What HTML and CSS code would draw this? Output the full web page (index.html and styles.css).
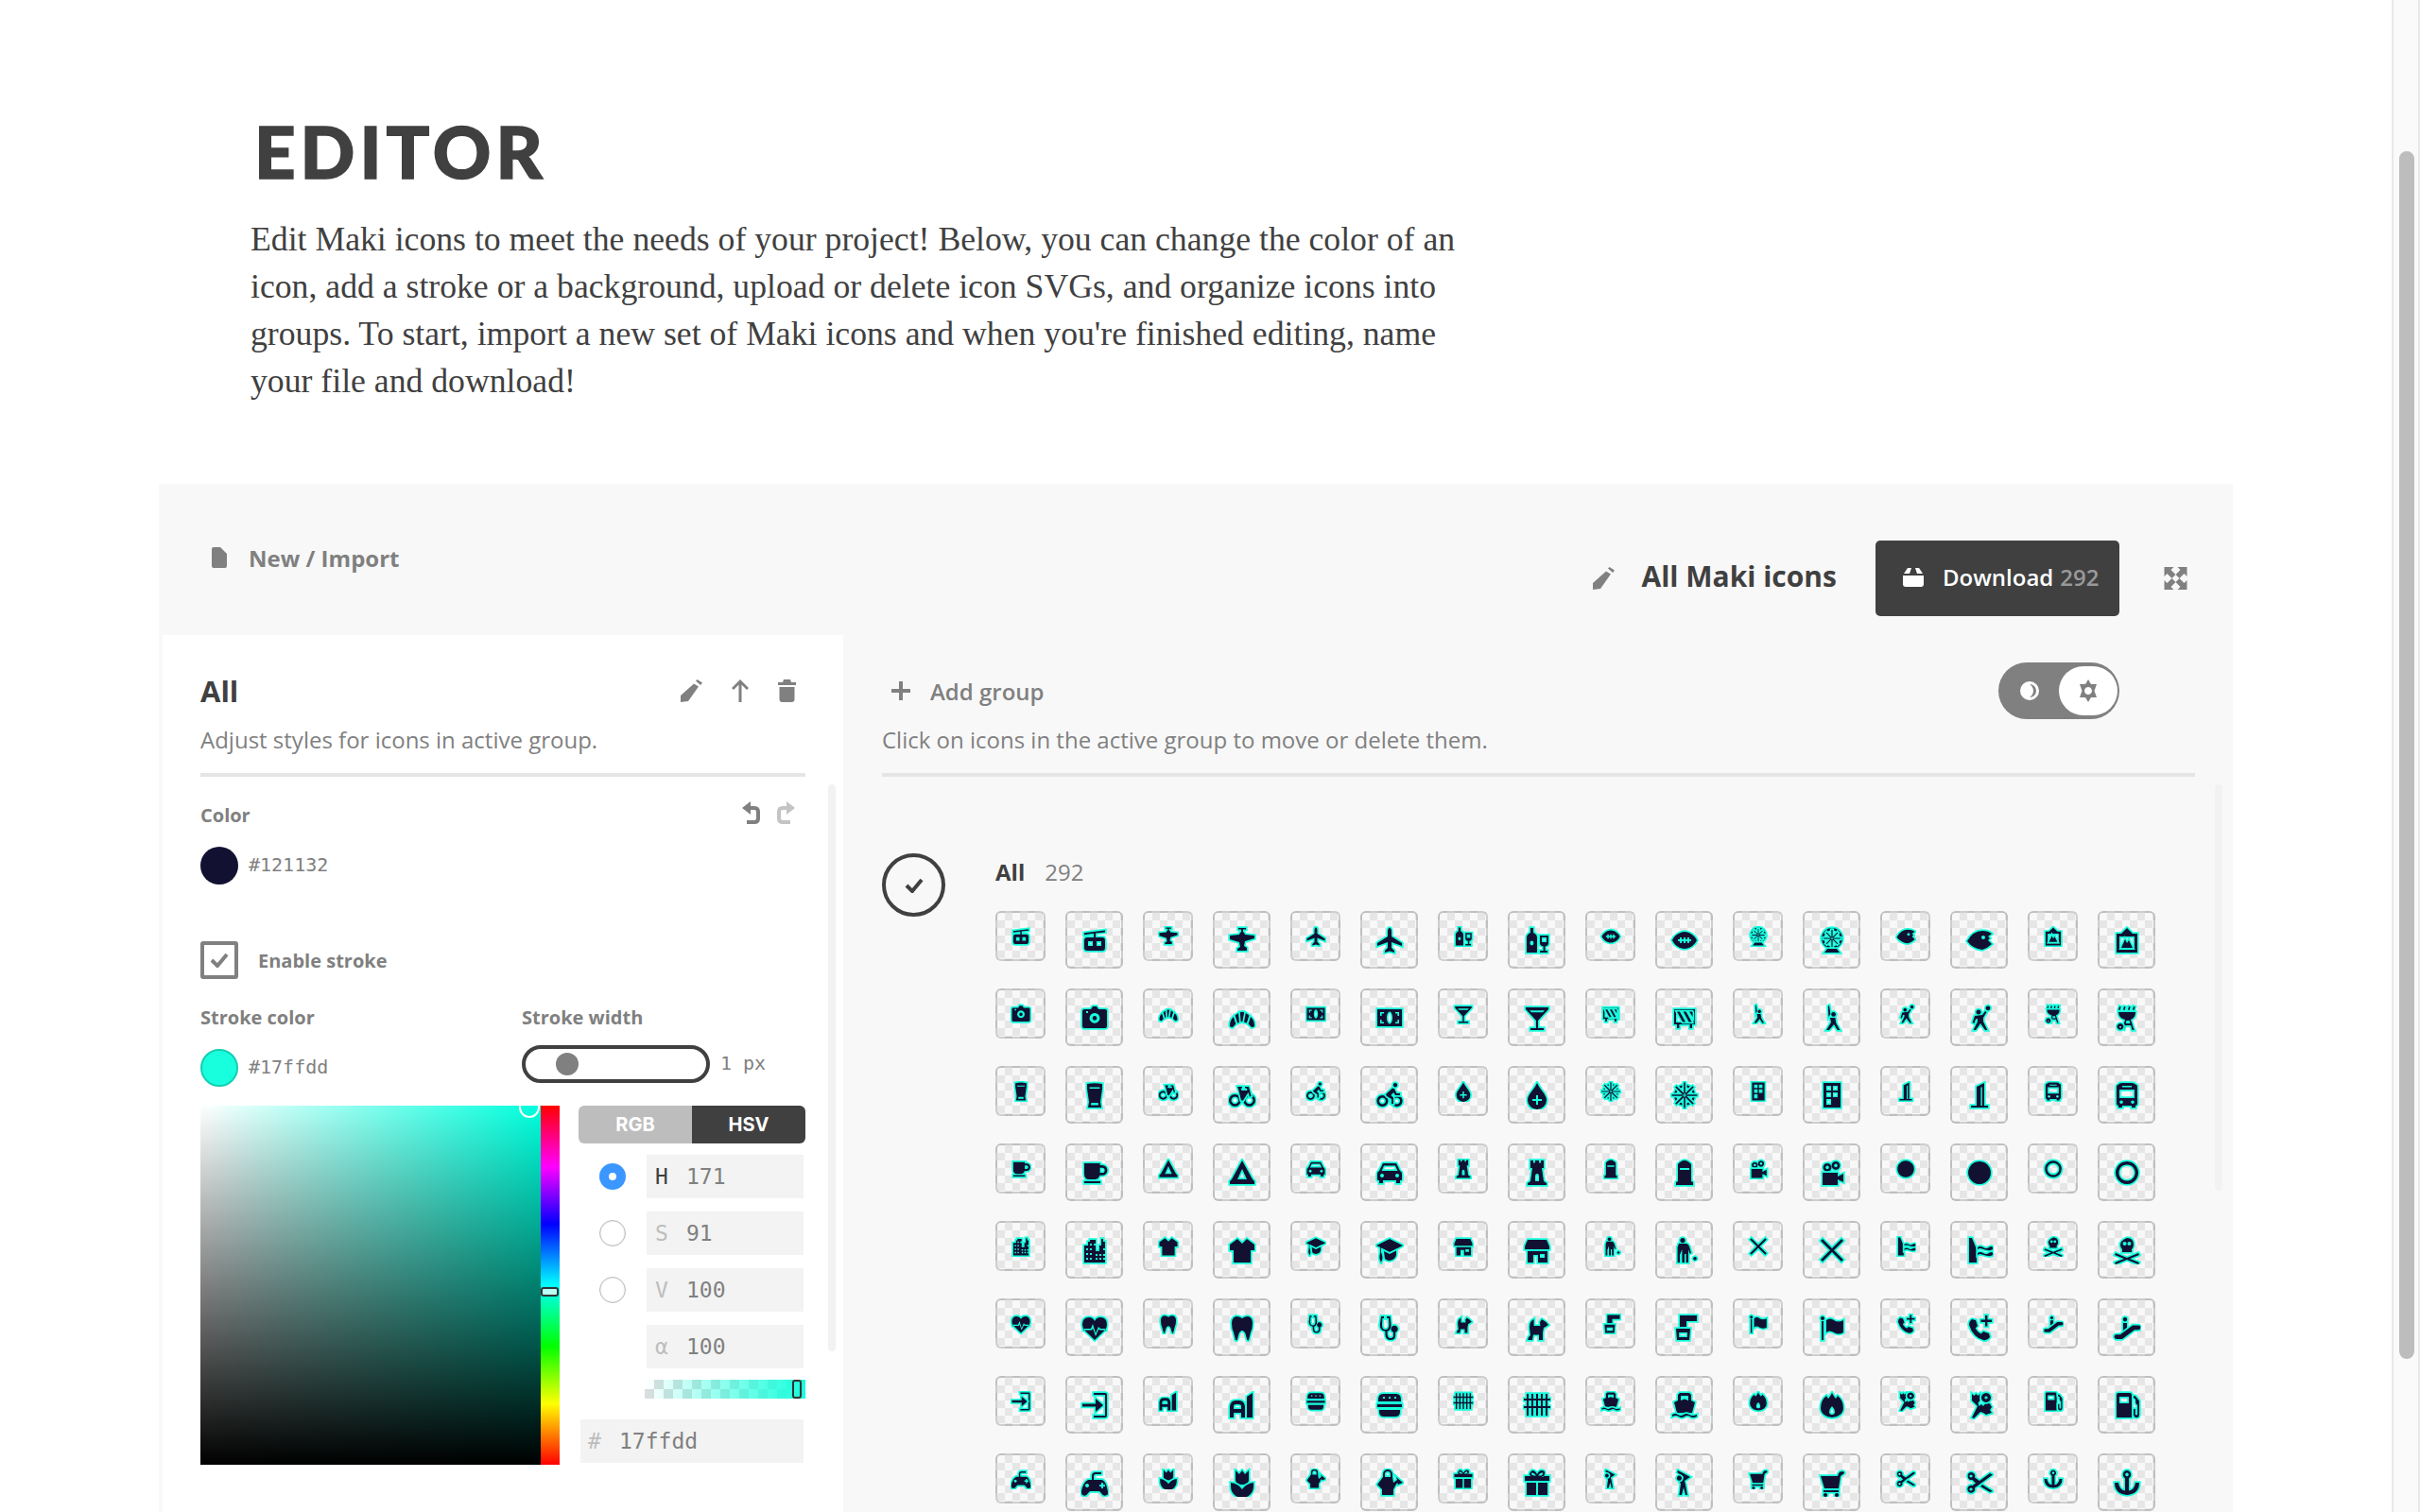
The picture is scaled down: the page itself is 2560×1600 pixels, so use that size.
FILE: index.html
```html
<!DOCTYPE html>
<html lang="en">
<head>
  <meta charset="UTF-8" />
  <title>Maki Editor</title>
  <link rel="stylesheet" href="styles.css">
</head>
<body>
  <!-- Maki icons, reused for both tile sizes -->
  <svg class="sprite" xmlns="http://www.w3.org/2000/svg">
    <symbol id="aerialway" viewBox="0 0 15 15"><path d="M2 3.600 13 2.200v1L8 3.800V6h3.500Q13 6 13 7.500v4q0 1.500-1.500 1.500h-8Q2 13 2 11.500v-4Q2 6 3.500 6H7V3.900L2 4.600zM4 8v2.500h2.500V8zM8.500 8v2.500H11V8z"/></symbol>
    <symbol id="airfield" viewBox="0 0 15 15"><path d="M5.500 1h4v.8H8V3q.7.4 1 1.500l5 .5v1.500l-5 1.500-.5 2.500 1.500 1v1.500H5V12l1.500-1L6 8.500 1 7V5l5-.5q.3-1.100 1-1.500V1.800H5.500z"/></symbol>
    <symbol id="airport" viewBox="0 0 15 15"><path d="M7.500 1Q8.500 1 8.500 3v2.500L14 9v1.500L8.500 8.500v3L10 13v1l-2.500-.7L5 14v-1l1.500-1.500v-3L1 10.500V9l5.500-3.500V3Q6.500 1 7.500 1z"/></symbol>
    <symbol id="alcohol" viewBox="0 0 15 15"><path d="M4 1h1.500v2.500Q7.500 4.500 7.500 6v8H2V6q0-1.500 2-2.500zM3.700 9a1 1.200 0 1 0 2 0 1 1.200 0 1 0-2 0z"/><path d="M9 5h4.500v4q0 1.500-1.700 1.700V13H13v1H9v-1h1.800v-2.300Q9 10.500 9 9zM10 6v2.500h2.500V6z"/></symbol>
    <symbol id="football" viewBox="0 0 15 15"><path d="M7.500 3C10 3 13 5 14 7.500 13 10 10 12 7.500 12S2 10 1 7.500C2 5 5 3 7.500 3zM4 7h1V6h1v1h1V6h1v1h1V6h1v1h1v1h-1v1H9V8H8v1H7V8H6v1H5V8H4z"/></symbol>
    <symbol id="wheel-park" viewBox="0 0 15 15"><path d="M7.500 1a5.500 5.500 0 1 1-.01 0zM7.500 2.200a4.300 4.300 0 1 0 .01 0z"/><path d="M7.200 2h.6v9h-.6zM3 6.200h9v.6H3zM4.300 3.600l.4-.4 6 6-.4.4zM10.300 3.200l.4.4-6 6-.4-.4z"/><path d="M5 12h5l1.500 2h-8z"/></symbol>
    <symbol id="fish" viewBox="0 0 15 15"><path d="M1 8Q4 2.500 9 2.500q3 0 5 1.500l-2 1.500 1 1-1 1 2 2q-2 2-5 3-5-.5-8-4.500zM9.500 5a1 1 0 1 0 .01 0z"/></symbol>
    <symbol id="gallery" viewBox="0 0 15 15"><path d="M7.500 1l3 3H13v10H2V4h2.500zM3.500 5.500v7h8v-7z"/><path d="M4.500 11.500 6.500 7l1 2 1-1.500 2 4z"/></symbol>

    <symbol id="camera" viewBox="0 0 15 15"><path d="M5.500 3 6.500 1.500h2L9.500 3H13q1 0 1 1v8q0 1-1 1H2q-1 0-1-1V4q0-1 1-1zM7.500 5a2.700 2.700 0 1 0 .01 0zM7.500 6.500a1.200 1.200 0 1 1-.01 0zM3 4v1h1V4z"/></symbol>
    <symbol id="croissant" viewBox="0 0 15 15"><path d="M1 11.500C1 9.500 1.800 8 3 7l1.200 3.800-1.700 1.700Q1 12.500 1 11.500z"/><path d="M3.800 6.300 5.600 5l.9 4.800-1.500.5z"/><path d="M6.400 4.600q1.100-.4 2.200 0L8.200 9.500H6.800z"/><path d="M11.200 6.300 9.400 5l-.9 4.800 1.500.5z"/><path d="M14 11.500C14 9.500 13.200 8 12 7l-1.200 3.800 1.700 1.700q1.500 0 1.500-1z"/></symbol>
    <symbol id="money" viewBox="0 0 15 15"><path d="M1 3h13v9H1zM7.500 4.300a1.500 3.200 0 1 0 .01 0zM2.500 4.500v2h.8V5.300h1.200v-.8zM12.500 4.500h-2v.8h1.200v1.200h.8zM2.500 10.500h2v-.8H3.300V8.500h-.8zM12.500 10.500v-2h-.8v1.200h-1.200v.8z"/></symbol>
    <symbol id="martini" viewBox="0 0 15 15"><path d="M1.500 2h12v1L8 9v4h3v1H4v-1h3V9L1.500 3zM3.500 3.600l1 1h6l1-1z"/></symbol>
    <symbol id="barrier" viewBox="0 0 15 15"><path d="M2 3h11v8h-1.500v2h-1.200v-2H4.700v2H3.500v-2H2zM3 4v6h9V4z"/><path d="M3.500 4.200H5l3 5.600H6.500zM6.800 4.200h1.500l3 5.600H9.800zM10 4.200h1.500l.3.600v2.200z"/></symbol>
    <symbol id="baseball" viewBox="0 0 15 15"><path d="M5.400 1.500 6 1l.7 4.500-1 1.500zM8.300 4.500a1.200 1.200 0 1 1-.01 0zM6.500 7.500h2.700l.5 3 2 3.500h-1.300L8.500 11 6 14H4.500L7 10z"/></symbol>
    <symbol id="basketball" viewBox="0 0 15 15"><path d="M12 1.200a1.200 1.200 0 1 1-.01 0zM7 3.200a1.300 1.300 0 1 1-.01 0zM5 6.500 9 6l1.500-2 .8.5L9.500 7.500v2l2.200 4.500h-1.200L8 10.500 5.500 14H4.300l2.200-4.500V8l-1 .2L4.700 10.500 3.800 10z"/></symbol>
    <symbol id="bbq" viewBox="0 0 15 15"><path d="M3.500 1.500l.8.300-.5 1.700-.8-.3zM6 1.500l.8.300-.5 1.700-.8-.3zM8.500 1.500l.8.300-.5 1.700-.8-.3zM11 1.500l.8.300-.5 1.700-.8-.3z"/><path d="M3 4.500h9q0 3-2.500 4l1.800 5.500h-1L9.500 11.500H6.700L6 13.500 5.300 13l1.200-4.500Q3 7.500 3 4.500zM7.200 9l-.3 1.500h2.300L8.800 9z"/><path d="M4 10.500a1.700 1.700 0 1 1-.01 0zM4 12a.4.4 0 1 0 .01 0z"/></symbol>

    <symbol id="beer" viewBox="0 0 15 15"><path d="M3.500 1.500q4-.8 8 0V4l-1 7 .5 3H4l.5-3-1-7zM4.800 3.200v.8h5.400v-.8zM5.700 11.500l-.2 1.300h4l-.2-1.300z"/></symbol>
    <symbol id="bicycle" viewBox="0 0 15 15"><path d="M3.700 7a3.200 3.200 0 1 1-.01 0zM3.700 8.300a1.900 1.900 0 1 0 .01 0zM11.300 7a3.200 3.200 0 1 1-.01 0zM11.300 8.300a1.900 1.900 0 1 0 .01 0z"/><path d="M5 3h2.500v.8h-.7l.4 1.200h3l-.3-1.300H9V3h2l1.300 5-.8.300L10.700 6l-2.700 4.300H7L5.700 5z"/></symbol>
    <symbol id="bicycle-share" viewBox="0 0 15 15"><path d="M3.700 7.500a3 3 0 1 1-.01 0zM3.700 8.800a1.700 1.700 0 1 0 .01 0zM11.300 7.500a3 3 0 1 1-.01 0zM11.300 8.800a1.700 1.700 0 1 0 .01 0z"/><path d="M10.500 1a1.100 1.100 0 1 1-.01 0zM5.500 7 9 3.700l1 .3 1.200 2.500H13v1h-2.500l-.9-1.500L8.200 7.500l1.300 1.300V12h-1V9.500L6 8z"/></symbol>
    <symbol id="blood" viewBox="0 0 15 15"><path d="M7.500 1C9 4.500 12.500 7 12.500 10a5 5 0 0 1-10 0C2.500 7 6 4.500 7.500 1zM7 7.500v2H5v1h2v2h1v-2h2v-1H8v-2z"/></symbol>
    <symbol id="dharma" viewBox="0 0 15 15"><path d="M7.500 2a5.500 5.500 0 1 1-.01 0zM7.500 3.100a4.400 4.400 0 1 0 .01 0z"/><path d="M7.100 .8h.8v13.400h-.8zM.8 7.100h13.400v.8H.8zM2.600 3.200l.6-.6 9.200 9.200-.6.6zM11.800 2.600l.6.6-9.200 9.200-.6-.6z"/></symbol>
    <symbol id="building" viewBox="0 0 15 15"><path d="M3 1h9v13H3zM4.500 2.500V5H7V2.500zM8 2.500V5h2.500V2.500zM4.500 6V8.500H7V6zM8 6V8.500h2.500V6zM4.500 9.500v3H7v-3z"/></symbol>
    <symbol id="tower" viewBox="0 0 15 15"><path d="M6 3l4-2v12h2v1H3v-1h3zM8.200 3.200V13h.7V3.200z"/></symbol>
    <symbol id="bus" viewBox="0 0 15 15"><path d="M3 1.800Q3.500 1 5 1h5q1.500 0 2 .8 1 .2 1 1.200v9q0 .8-1 1v1h-2v-1H5v1H3v-1q-1-.2-1-1V3q0-1 1-1.200zM5 2.500v.8h5v-.8zM3.500 4.500V9h8V4.500zM4.500 10.200a.9.900 0 1 0 .01 0zM10.500 10.200a.9.900 0 1 0 .01 0z"/></symbol>

    <symbol id="cafe" viewBox="0 0 15 15"><path d="M2 2.500h8.300v1h1.200a2.700 2.700 0 0 1 0 5.400h-1.300Q9.500 11 7.500 11h-3Q2 11 2 8zM10.300 4.900v2.600h1.200a1.300 1.300 0 0 0 0-2.600zM2 12h8.500v1H2z"/></symbol>
    <symbol id="campsite" viewBox="0 0 15 15"><path d="M7.500 1l5.500 10 1 1v1.500H1V12l1-1zM7.500 5.500 5 11h5z"/></symbol>
    <symbol id="car" viewBox="0 0 15 15"><path d="M4 2.500h7l2 4q1 .5 1 1.500v3q0 .5-.5.5H13V13h-2v-1.500H4V13H2v-1.500h-.5Q1 11.500 1 11V8q0-1 1-1.500zM4.500 3.700 3.300 6.500h8.400l-1.200-2.800zM3.500 8a1 1 0 1 0 .01 0zM11.500 8a1 1 0 1 0 .01 0z"/></symbol>
    <symbol id="castle" viewBox="0 0 15 15"><path d="M4 1h1.500v1.300h1V1h2v1.300h1V1H11v4h-1l1 7 1.500 1v1h-10v-1L4 12l1-7H4zM7.500 8Q6.500 8 6.500 9.500V12h2V9.500Q8.500 8 7.500 8z"/></symbol>
    <symbol id="cemetery" viewBox="0 0 15 15"><path d="M7.500 1C9 1 10 2 11 3v9l1 .5V14H3v-1.500l1-.5V3C5 2 6 1 7.500 1zM5 5v1h5V5z"/></symbol>
    <symbol id="cinema" viewBox="0 0 15 15"><path d="M5 2.500a2.200 2.200 0 1 1-.01 0zM5 3.800a.9.900 0 1 0 .01 0zM9.500 1.500a2.200 2.200 0 1 1-.01 0zM9.500 2.800a.9.900 0 1 0 .01 0z"/><path d="M2.500 7.500h8v2l3-1.500v4.500l-3-1.500V14h-8z"/></symbol>
    <symbol id="circle" viewBox="0 0 15 15"><path d="M7.500 1.500a6 6 0 1 1-.01 0z"/></symbol>
    <symbol id="circle-stroked" viewBox="0 0 15 15"><path d="M7.500 1.500a6 6 0 1 1-.01 0zM7.500 3.200a4.300 4.300 0 1 0 .01 0z"/></symbol>

    <symbol id="city" viewBox="0 0 15 15"><path d="M2 14V5h2V3h1V2h3v6h2V5h1V1.500h1V3h1v11zM3 6.500v1h1v-1zM5 4v1h1V4zM7 4v1h1V4zM3 9v1h1V9zM5 6.500v1h1v-1zM5 9v1h1V9zM3 11.500v1h1v-1zM5 11.500v1h1v-1zM8 9.500v1h1v-1zM8 11.500v1h1v-1zM10 9.500v1h1v-1zM10 11.500v1h1v-1zM12 6.500v1h1v-1zM12 9.500v1h1v-1zM12 11.500v1h1v-1z"/></symbol>
    <symbol id="shirt" viewBox="0 0 15 15"><path d="M5 1.500 7.500 4 10 1.500l4 3v3H12V14H3V7.500H1v-3z"/></symbol>
    <symbol id="college" viewBox="0 0 15 15"><path d="M7.500 1.500 14.500 5 7.500 8.500 3 6.300v2.200l.7 2v1.500L3 14l-.8-2V10.500L2.600 8.500V6L.5 5z"/><path d="M4.500 8l3 1.500 3.500-1.700V10q-.5 2.500-3.500 3-1.500 0-2.500-1z"/></symbol>
    <symbol id="shop" viewBox="0 0 15 15"><path d="M2.500 2h10L14 5.500V7H1V5.500zM2.500 8H13v6H8V10H5.500v4h-3zM9 9.500v2h2.500v-2z"/></symbol>
    <symbol id="litter" viewBox="0 0 15 15"><path d="M6.500 1a1.300 1.300 0 1 1-.01 0zM4.500 4h4q1 .3 1.500 1.500l1 3.500-.8.300L9.500 7v7H8.300V9.500H7.500V14H6.200V7L5 10v4H3.800V6zM13 11a.9.900 0 1 0 .01 0z"/></symbol>
    <symbol id="cross" viewBox="0 0 15 15"><path d="M2.500 1.500 7.500 6.500l5-5 1 1-5 5 5 5-1 1-5-5-5 5-1-1 5-5-5-5z"/></symbol>
    <symbol id="dam" viewBox="0 0 15 15"><path d="M2 1h1.500L6 7v7H2z"/><path d="M6.500 6q1.500-1 3 0t3 0 2 0v1q-1 .8-2.500.5t-3-.8-2.500.3zM6.500 9q1.500-1 3 0t3 0 2 0v1q-1 .8-2.500.5t-3-.8-2.500.3z"/></symbol>
    <symbol id="skull" viewBox="0 0 15 15"><path d="M7.500 1C10 1 11 2.500 11 4.500q0 1.500-1 2.500v1.500H5V7Q4 6 4 4.500 4 2.500 7.500 1zM5.300 4a1 1 0 1 0 2 0 1 1 0 1 0-2 0zM7.700 4a1 1 0 1 0 2 0 1 1 0 1 0-2 0z"/><path d="M1.500 9 7.500 11.500 13.500 9l.5 1-5 2 5 2-.5 1-6-2.500L1.500 15 1 14l5-2-5-2z"/></symbol>

    <symbol id="heart-pulse" viewBox="0 0 15 15"><path d="M7.500 14 1.800 8.500Q1 7.300 1 5.800 1 2 4.500 2q2 0 3 2 1-2 3-2 3.500 0 3.500 3.800 0 1.500-.8 2.700zM1.500 8H5.500L6.500 5.500 8 10.500 9.500 7 10.500 8H13.500v.8H10.200L9.600 8.300 8 12 6.500 7.700 6 8.800H1.500z"/></symbol>
    <symbol id="tooth" viewBox="0 0 15 15"><path d="M4.500 1.500Q6 1.500 7.500 2.500 9 1.500 10.500 1.500 13 2 13 5q0 3-1 5-.5 2-1 4-.8.500-1-.5l-.8-3q-.7-1.500-1.700-1.500t-1.700 1.500l-.8 3q-.2 1-1 .5-.5-2-1-4-1-2-1-5 0-3 2.500-3.500z"/></symbol>
    <symbol id="stethoscope" viewBox="0 0 15 15"><path d="M3 1.500h1.500v1H3.700L3.500 6q0 2.500 1.800 2.500T7.200 6l-.2-3.500H6v-1h1.800L8.300 6q0 2.800-2 3.400V11q.2 2 1.700 2t1.500-1.500v-1.600a1.800 1.800 0 1 1 1.100 0v1.600Q10.600 14 8 14T5.200 11V9.400q-2.800-.6-2.800-3.400z"/></symbol>
    <symbol id="dog" viewBox="0 0 15 15"><path d="M5 3.500 5.800 3v3.500h3.400L9 4.500l1-1.500q2 1 3.500 3l-1.500 1-1 .5-.5 2.500V14H8.500V11.200h-3L5 14H2.500l.5-1.500 1-1-.5-4Q3.500 4.500 5 3.500z"/></symbol>
    <symbol id="water" viewBox="0 0 15 15"><path d="M5 1h9v3H8.500v3H5V4q0-3 0-3z"/><path d="M3 8h7.500L10 14H3.500zM4.600 10v2.500h4.300L9 10z"/></symbol>
    <symbol id="flag" viewBox="0 0 15 15"><path d="M2.500 1.500a1 1 0 1 1-.01 0zM2 4h1v10H2z"/><path d="M4.500 3.500q2-1.500 4 0t5 0V10q-2.500 1.500-5 0t-4 0z"/></symbol>
    <symbol id="phone-plus" viewBox="0 0 15 15"><path d="M3.500 3l2 .5 1 3-1.200 1.200q1 2 3 3L9.500 9.500l3 1 .5 2q-1.500 2-3.500 1.500Q4 12.500 2 6 2 4 3.500 3z"/><path d="M10.500 1h1.200v2.300H14v1.200h-2.300v2.300h-1.200V4.500H8.200V3.300h2.300z"/></symbol>
    <symbol id="escalator" viewBox="0 0 15 15"><path d="M6.500 2a1.100 1.100 0 1 1-.01 0zM5.500 5h2v4l-2 1.500z"/><path d="M10.500 6.200h3a1.200 1.200 0 0 1 0 2.400h-2L5 13.500H2a1.200 1.200 0 0 1 0-2.400h2z"/></symbol>

    <symbol id="entrance" viewBox="0 0 15 15"><path d="M7 1h6q1 0 1 1v11q0 1-1 1H7v-1h6V2H7z"/><path d="M8 4l4 3.500L8 11V8.300H1V6.700h7z"/></symbol>
    <symbol id="farm" viewBox="0 0 15 15"><path d="M4 5h2q2.500 0 3 3v6H7v-2.500H3V14H1V8q.5-3 3-3zM3 9.500h4V8q0-1-1.500-1h-1Q3 7 3 8zM10 3l3-2v13h-3z"/></symbol>
    <symbol id="burger" viewBox="0 0 15 15"><path d="M4 1.500h7q2.500 0 2.500 3v1h-12v-1q0-3 2.500-3zM4 3v1h1V3zM7 3v1h1V3zM10 3v1h1V3zM1 7h13v1.500H1zM2 10h11v1q0 2.500-2.500 2.500h-6Q2 13.500 2 11z"/></symbol>
    <symbol id="fence" viewBox="0 0 15 15"><path d="M2 1.500h1V4h1.500V1.500h1V4H7V1.500h1V4h1.500V1.500h1V4H12V1.500h1V4h1.500v1H13v3h1.500v1H13v4h-1V9h-1.500v4h-1V9H8v4H7V9H5.500v4h-1V9H3v4H2V9H.5V8H2V5H.5V4H2zM3 5v3h1.500V5zM5.500 5v3H7V5zM8 5v3h1.500V5zM10.500 5v3H12V5z"/></symbol>
    <symbol id="ferry" viewBox="0 0 15 15"><path d="M5 1h5l1 1v3l2 1-1.500 5.500h-8L2 6l2-1V2zM5.500 2.500V5l2-.8 2 .8V2.500z"/><path d="M1 12.500q1.500-1 3 0t3 0 3 0 4 0v1q-2 1-3.500 0t-3 0-3 0-3.500 0z"/></symbol>
    <symbol id="fire" viewBox="0 0 15 15"><path d="M7.500 1q1 2 2 3l1-1.500q3 2.500 3 6.500a6 5 0 0 1-12 0q0-4 3-6.500l1 1.500q1-1 2-3zM7.500 8Q6 9.500 6 11a1.500 1.500 0 0 0 3 0Q9 9.500 7.500 8z"/></symbol>
    <symbol id="florist" viewBox="0 0 15 15"><path d="M3.500 14 6.500 8 5 6.500 3.500 5V1.500l1.200 1 1-1 1 1 1-1V5L6.700 6.500 7.300 8 8.500 7 9.500 8 11 6l2 .8L14 8.500l-1 1.500 1 1.500-3 1-1.500-1L8 11 4.500 14.500z"/><path d="M11 1a2.500 2.500 0 1 1-.01 0zM11 2.700a.8.800 0 1 0 .01 0z"/></symbol>
    <symbol id="fuel" viewBox="0 0 15 15"><path d="M2 2q0-1 1-1h6q1 0 1 1v12H2zM3.500 3v3.500h5V3z"/><path d="M11 2.500l1 .2 2 2.500v7q0 1.800-1.500 1.800T11 12V9.500h.9V12q0 .8.6.8t.6-.8V7.500q-1-.5-1-1.500V4.500L11 3.500z"/></symbol>

    <symbol id="gaming" viewBox="0 0 15 15"><path d="M4 6h2V4q0-2 2-2h3v1H8q-1 0-1 1v2h4q2 0 3 4t0 4q-2 1-3-1l-1-1H5l-1 1q-1 2-3 1-1-1 0-4t3-4zM11 7.500v1h-1v1h1v1h1v-1h1v-1h-1v-1zM3.500 8a1 1 0 1 0 .01 0z"/></symbol>
    <symbol id="tulip" viewBox="0 0 15 15"><path d="M4 1l2 2 1.500-2L9 3l2-2v5q0 2.500-3.500 2.500T4 6z"/><path d="M1.500 7.500q4 .5 6 3.500 2-3 6-3.500v2a6 6 0 0 1-12 0z"/></symbol>
    <symbol id="watering" viewBox="0 0 15 15"><path d="M4 4.500V3a2.500 2.500 0 0 1 5 0v1.500l.5 3 2-1.500-.5-1.500 3.500 3-2.500 1-.5-1L9.500 11v3H3.500v-3L1 8.500zM5 3v1.500h3V3a1.500 1.500 0 0 0-3 0z"/></symbol>
    <symbol id="gift" viewBox="0 0 15 15"><path d="M5 1q1.500 0 2.500 2Q8.500 1 10 1q2 0 1.500 2t-1.500 1H14v2.500H1V4h4Q3.500 4 3.500 3T5 1zM5 2.200q-.5 0-.5.7t1.500.9h1Q6 2.200 5 2.200zM10 2.200q-1 0-2 1.600h1q1.500 0 1.500-.9T10 2.200z"/><path d="M2 7.500h5V14H2zM8 7.500h5V14H8z"/></symbol>
    <symbol id="golf" viewBox="0 0 15 15"><path d="M4 1l6.500 3.500-3 2 .5 2 1 5.500H8l-1-4-1 4H4.700l.8-6L4.500 6.500 7 4.500 3.600 2z"/><path d="M4.700 3.800a1.300 1.300 0 1 1-.01 0z"/></symbol>
    <symbol id="cart" viewBox="0 0 15 15"><path d="M13 1.500q1 0 1 1l-1 .8-1 .7-1 6.500H3.500L1.500 4h9l.5-1.500q.5-1 2-1z"/><path d="M3 11.500h8v1H3zM4 13a1 1 0 1 0 .01 0zM10 13a1 1 0 1 0 .01 0z"/></symbol>
    <symbol id="scissors" viewBox="0 0 15 15"><path d="M3 2a2 2 0 0 1 2 2.800L7.500 6.500 13 2.500l1.500.7L5 10.200A2 2 0 1 1 3.700 9L5.500 7.800 3.700 6A2 2 0 1 1 3 2zM3 3.200a.8.800 0 1 0 .01 0zM3 10.200a.8.800 0 1 0 .01 0z"/><path d="M9 8.500 14.500 12l-1.500.5-5-3z"/></symbol>
    <symbol id="anchor" viewBox="0 0 15 15"><path d="M7.500 1a2.200 2.200 0 0 1 1 4.100v6.700q3-.5 3.500-4.300H14q0 6-6.500 6.500Q1 13.500 1 7.500h2q.5 3.800 3.500 4.300V5.100A2.200 2.200 0 0 1 7.500 1zM7.500 2.300a.9.900 0 1 0 .01 0z"/></symbol>
  </svg>

  <div class="page">
    <main class="main">
      <section class="intro">
        <h1>EDITOR</h1>
        <p>Edit Maki icons to meet the needs of your project! Below, you can change the color of an icon, add a stroke or a background, upload or delete icon SVGs, and organize icons into groups. To start, import a new set of Maki icons and when you're finished editing, name your file and download!</p>
      </section>

      <section class="editor">
        <!-- Верхняя панель -->
        <div class="topbar">
          <div class="import">
            <svg class="ui-icon icon-file" viewBox="0 0 16 22"><path d="M2 0h7l7 7v13q0 2-2 2H2q-2 0-2-2V2q0-2 2-2z"/></svg>
            <span>New / Import</span>
          </div>
          <div class="top-right">
            <svg class="ui-icon icon-24" viewBox="0 0 24 24"><path d="M15 4.500l5 3L9 23l-8 1V17zM17 1.500 18.500 0 24 3.500 22 6z"/></svg>
            <strong class="set-name">All Maki icons</strong>
            <button class="download">
              <svg class="icon-gift" viewBox="0 0 22 20"><path d="M5 0h4L7 6H1zM13 0h4l4 6h-6zM0 8h22v9q0 3-3 3H3q-3 0-3-3z"/></svg>
              <span>Download</span><span class="count">292</span>
            </button>
            <svg class="ui-icon icon-expand" viewBox="0 0 24 24"><path d="M0 0H10L7 3 12 8 8 12 3 7 0 10zM24 0H14L17 3 12 8 16 12 21 7 24 10zM0 24H10L7 21 12 16 8 12 3 17 0 14zM24 24H14L17 21 12 16 16 12 21 17 24 14z"/></svg>
          </div>
        </div>

        <div class="workspace">
          <!-- Левая панель стилей -->
          <aside class="sidebar">
            <div class="head">
              <div class="head-row">
                <strong class="group-title">All</strong>
                <div class="tools">
                  <svg class="ui-icon icon-24" viewBox="0 0 24 24"><path d="M15 4.500l5 3L9 23l-8 1V17zM17 1.500 18.500 0 24 3.500 22 6z"/></svg>
                  <svg class="ui-icon icon-arrow" viewBox="0 0 20 24"><path d="M10 0l9 9-2 2-5.500-5.500V24h-3V5.500L3 11 1 9z"/></svg>
                  <svg class="ui-icon icon-trash" viewBox="0 0 19 24"><path d="M6 0h7l1 3h5v3H0V3h5zM1.500 8h16v13q0 3-3 3h-10q-3 0-3-3z"/></svg>
                </div>
              </div>
              <p class="hint">Adjust styles for icons in active group.</p>
            </div>

            <div class="color-head">
              <label class="field-label">Color</label>
              <div class="history">
                <svg class="ui-icon icon-undo" viewBox="0 0 19 24"><path d="M9 0v5h4q6 0 6 6v7q0 6-6 6H5v-4h8q2 0 2-2v-7q0-2-2-2H9v5L0 7z"/></svg>
                <svg class="ui-icon icon-undo icon-off" viewBox="0 0 19 24"><path d="M10 0v5H6Q0 5 0 11v7q0 6 6 6h8v-4H6q-2 0-2-2v-7q0-2 2-2h4v5l9-7z"/></svg>
              </div>
            </div>
            <div class="swatch-row">
              <span class="swatch swatch-fill"></span>
              <span class="mono">#121132</span>
            </div>

            <div class="enable">
              <span class="checkbox">
                <svg viewBox="0 0 20 16"><path d="M2 8l6 6L18 2" fill="none" stroke="#808080" stroke-width="4"/></svg>
              </span>
              <span>Enable stroke</span>
            </div>

            <div class="stroke-grid">
              <label class="field-label">Stroke color</label>
              <label class="field-label">Stroke width</label>
              <div class="swatch-row">
                <span class="swatch swatch-stroke"></span>
                <span class="mono">#17ffdd</span>
              </div>
              <div class="width-row">
                <div class="range"><span class="range-thumb"></span></div>
                <span class="mono">1 px</span>
              </div>
            </div>

            <div class="picker">
              <div class="sat"><span class="sat-cursor"></span></div>
              <div class="hue"><span class="hue-handle"></span></div>
              <div class="picker-side">
                <div class="mode">
                  <span class="mode-off">RGB</span>
                  <span class="mode-on">HSV</span>
                </div>
                <div class="chan"><span class="radio radio-on"></span><div class="chan-input"><b class="on">H</b>171</div></div>
                <div class="chan"><span class="radio"></span><div class="chan-input"><b>S</b>91</div></div>
                <div class="chan"><span class="radio"></span><div class="chan-input"><b>V</b>100</div></div>
                <div class="chan"><span class="radio radio-none"></span><div class="chan-input"><b>α</b>100</div></div>
                <div class="alpha"><span class="alpha-handle"></span></div>
                <div class="hex"><b>#</b>17ffdd</div>
              </div>
            </div>
            <div class="track track-side"></div>
          </aside>

          <!-- Иконки -->
          <div class="pane">
            <div class="head">
              <div class="head-row">
                <div class="add-group">
                  <svg class="ui-icon icon-plus" viewBox="0 0 20 20"><path d="M8 0h4v8h8v4h-8v8H8v-8H0V8h8z"/></svg>
                  <span>Add group</span>
                </div>
                <div class="toggle">
                  <svg class="icon-moon" viewBox="0 0 20 20"><path d="M10 0a10 10 0 1 1 0 20 10 10 0 0 1 0-20zM10 3q4 3 4 7t-4 7a7 7 0 0 0 0-14z" fill-rule="evenodd"/></svg>
                  <span class="toggle-knob">
                    <svg class="icon-sun" viewBox="0 0 24 24"><path d="M12 0l3 5h6l-2.500 7 2.500 7h-6l-3 5-3-5H3l2.500-7L3 5h6zM12 8a4 4 0 1 0 .01 0z" fill-rule="evenodd"/></svg>
                  </span>
                </div>
              </div>
              <p class="hint">Click on icons in the active group to move or delete them.</p>
            </div>

            <div class="group">
              <span class="group-check">
                <svg viewBox="0 0 20 16"><path d="M2 8l6 6L18 2" fill="none" stroke="#404040" stroke-width="4"/></svg>
              </span>
              <div class="group-body">
                <div class="group-name"><strong>All</strong><span>292</span></div>
                <div class="tiles">
                  <div class="tile"><svg><use href="#aerialway"/></svg></div><div class="tile tile-lg"><svg><use href="#aerialway"/></svg></div>
                  <div class="tile"><svg><use href="#airfield"/></svg></div><div class="tile tile-lg"><svg><use href="#airfield"/></svg></div>
                  <div class="tile"><svg><use href="#airport"/></svg></div><div class="tile tile-lg"><svg><use href="#airport"/></svg></div>
                  <div class="tile"><svg><use href="#alcohol"/></svg></div><div class="tile tile-lg"><svg><use href="#alcohol"/></svg></div>
                  <div class="tile"><svg><use href="#football"/></svg></div><div class="tile tile-lg"><svg><use href="#football"/></svg></div>
                  <div class="tile"><svg><use href="#wheel-park"/></svg></div><div class="tile tile-lg"><svg><use href="#wheel-park"/></svg></div>
                  <div class="tile"><svg><use href="#fish"/></svg></div><div class="tile tile-lg"><svg><use href="#fish"/></svg></div>
                  <div class="tile"><svg><use href="#gallery"/></svg></div><div class="tile tile-lg"><svg><use href="#gallery"/></svg></div>

                  <div class="tile"><svg><use href="#camera"/></svg></div><div class="tile tile-lg"><svg><use href="#camera"/></svg></div>
                  <div class="tile"><svg><use href="#croissant"/></svg></div><div class="tile tile-lg"><svg><use href="#croissant"/></svg></div>
                  <div class="tile"><svg><use href="#money"/></svg></div><div class="tile tile-lg"><svg><use href="#money"/></svg></div>
                  <div class="tile"><svg><use href="#martini"/></svg></div><div class="tile tile-lg"><svg><use href="#martini"/></svg></div>
                  <div class="tile"><svg><use href="#barrier"/></svg></div><div class="tile tile-lg"><svg><use href="#barrier"/></svg></div>
                  <div class="tile"><svg><use href="#baseball"/></svg></div><div class="tile tile-lg"><svg><use href="#baseball"/></svg></div>
                  <div class="tile"><svg><use href="#basketball"/></svg></div><div class="tile tile-lg"><svg><use href="#basketball"/></svg></div>
                  <div class="tile"><svg><use href="#bbq"/></svg></div><div class="tile tile-lg"><svg><use href="#bbq"/></svg></div>

                  <div class="tile"><svg><use href="#beer"/></svg></div><div class="tile tile-lg"><svg><use href="#beer"/></svg></div>
                  <div class="tile"><svg><use href="#bicycle"/></svg></div><div class="tile tile-lg"><svg><use href="#bicycle"/></svg></div>
                  <div class="tile"><svg><use href="#bicycle-share"/></svg></div><div class="tile tile-lg"><svg><use href="#bicycle-share"/></svg></div>
                  <div class="tile"><svg><use href="#blood"/></svg></div><div class="tile tile-lg"><svg><use href="#blood"/></svg></div>
                  <div class="tile"><svg><use href="#dharma"/></svg></div><div class="tile tile-lg"><svg><use href="#dharma"/></svg></div>
                  <div class="tile"><svg><use href="#building"/></svg></div><div class="tile tile-lg"><svg><use href="#building"/></svg></div>
                  <div class="tile"><svg><use href="#tower"/></svg></div><div class="tile tile-lg"><svg><use href="#tower"/></svg></div>
                  <div class="tile"><svg><use href="#bus"/></svg></div><div class="tile tile-lg"><svg><use href="#bus"/></svg></div>

                  <div class="tile"><svg><use href="#cafe"/></svg></div><div class="tile tile-lg"><svg><use href="#cafe"/></svg></div>
                  <div class="tile"><svg><use href="#campsite"/></svg></div><div class="tile tile-lg"><svg><use href="#campsite"/></svg></div>
                  <div class="tile"><svg><use href="#car"/></svg></div><div class="tile tile-lg"><svg><use href="#car"/></svg></div>
                  <div class="tile"><svg><use href="#castle"/></svg></div><div class="tile tile-lg"><svg><use href="#castle"/></svg></div>
                  <div class="tile"><svg><use href="#cemetery"/></svg></div><div class="tile tile-lg"><svg><use href="#cemetery"/></svg></div>
                  <div class="tile"><svg><use href="#cinema"/></svg></div><div class="tile tile-lg"><svg><use href="#cinema"/></svg></div>
                  <div class="tile"><svg><use href="#circle"/></svg></div><div class="tile tile-lg"><svg><use href="#circle"/></svg></div>
                  <div class="tile"><svg><use href="#circle-stroked"/></svg></div><div class="tile tile-lg"><svg><use href="#circle-stroked"/></svg></div>

                  <div class="tile"><svg><use href="#city"/></svg></div><div class="tile tile-lg"><svg><use href="#city"/></svg></div>
                  <div class="tile"><svg><use href="#shirt"/></svg></div><div class="tile tile-lg"><svg><use href="#shirt"/></svg></div>
                  <div class="tile"><svg><use href="#college"/></svg></div><div class="tile tile-lg"><svg><use href="#college"/></svg></div>
                  <div class="tile"><svg><use href="#shop"/></svg></div><div class="tile tile-lg"><svg><use href="#shop"/></svg></div>
                  <div class="tile"><svg><use href="#litter"/></svg></div><div class="tile tile-lg"><svg><use href="#litter"/></svg></div>
                  <div class="tile"><svg><use href="#cross"/></svg></div><div class="tile tile-lg"><svg><use href="#cross"/></svg></div>
                  <div class="tile"><svg><use href="#dam"/></svg></div><div class="tile tile-lg"><svg><use href="#dam"/></svg></div>
                  <div class="tile"><svg><use href="#skull"/></svg></div><div class="tile tile-lg"><svg><use href="#skull"/></svg></div>

                  <div class="tile"><svg><use href="#heart-pulse"/></svg></div><div class="tile tile-lg"><svg><use href="#heart-pulse"/></svg></div>
                  <div class="tile"><svg><use href="#tooth"/></svg></div><div class="tile tile-lg"><svg><use href="#tooth"/></svg></div>
                  <div class="tile"><svg><use href="#stethoscope"/></svg></div><div class="tile tile-lg"><svg><use href="#stethoscope"/></svg></div>
                  <div class="tile"><svg><use href="#dog"/></svg></div><div class="tile tile-lg"><svg><use href="#dog"/></svg></div>
                  <div class="tile"><svg><use href="#water"/></svg></div><div class="tile tile-lg"><svg><use href="#water"/></svg></div>
                  <div class="tile"><svg><use href="#flag"/></svg></div><div class="tile tile-lg"><svg><use href="#flag"/></svg></div>
                  <div class="tile"><svg><use href="#phone-plus"/></svg></div><div class="tile tile-lg"><svg><use href="#phone-plus"/></svg></div>
                  <div class="tile"><svg><use href="#escalator"/></svg></div><div class="tile tile-lg"><svg><use href="#escalator"/></svg></div>

                  <div class="tile"><svg><use href="#entrance"/></svg></div><div class="tile tile-lg"><svg><use href="#entrance"/></svg></div>
                  <div class="tile"><svg><use href="#farm"/></svg></div><div class="tile tile-lg"><svg><use href="#farm"/></svg></div>
                  <div class="tile"><svg><use href="#burger"/></svg></div><div class="tile tile-lg"><svg><use href="#burger"/></svg></div>
                  <div class="tile"><svg><use href="#fence"/></svg></div><div class="tile tile-lg"><svg><use href="#fence"/></svg></div>
                  <div class="tile"><svg><use href="#ferry"/></svg></div><div class="tile tile-lg"><svg><use href="#ferry"/></svg></div>
                  <div class="tile"><svg><use href="#fire"/></svg></div><div class="tile tile-lg"><svg><use href="#fire"/></svg></div>
                  <div class="tile"><svg><use href="#florist"/></svg></div><div class="tile tile-lg"><svg><use href="#florist"/></svg></div>
                  <div class="tile"><svg><use href="#fuel"/></svg></div><div class="tile tile-lg"><svg><use href="#fuel"/></svg></div>

                  <div class="tile"><svg><use href="#gaming"/></svg></div><div class="tile tile-lg"><svg><use href="#gaming"/></svg></div>
                  <div class="tile"><svg><use href="#tulip"/></svg></div><div class="tile tile-lg"><svg><use href="#tulip"/></svg></div>
                  <div class="tile"><svg><use href="#watering"/></svg></div><div class="tile tile-lg"><svg><use href="#watering"/></svg></div>
                  <div class="tile"><svg><use href="#gift"/></svg></div><div class="tile tile-lg"><svg><use href="#gift"/></svg></div>
                  <div class="tile"><svg><use href="#golf"/></svg></div><div class="tile tile-lg"><svg><use href="#golf"/></svg></div>
                  <div class="tile"><svg><use href="#cart"/></svg></div><div class="tile tile-lg"><svg><use href="#cart"/></svg></div>
                  <div class="tile"><svg><use href="#scissors"/></svg></div><div class="tile tile-lg"><svg><use href="#scissors"/></svg></div>
                  <div class="tile"><svg><use href="#anchor"/></svg></div><div class="tile tile-lg"><svg><use href="#anchor"/></svg></div>
                </div>
              </div>
            </div>
            <div class="track track-pane"></div>
          </div>
        </div>
      </section>
    </main>

    <div class="scrollbar"><span class="scrollbar-thumb"></span></div>
  </div>
</body>
</html>
```

FILE: styles.css
```css
html, body {
  height: 100%;
  margin: 0;
  overflow: hidden;
}

body {
  font-family: 'Open Sans', sans-serif;
  background: #fff;
  color: #404040;
}

.sprite {
  display: none;
}

.page {
  display: flex;
  height: 1600px;
  overflow: hidden;
}

.main {
  flex: 1;
  min-width: 0;
}

.scrollbar {
  width: 30px;
  background: #fafafa;
  border-left: 2px solid #e8e8e8;
  border-right: 2px solid #e8e8e8;
  box-sizing: border-box;
  padding: 160px 4px 0 6px;
}

.scrollbar-thumb {
  display: block;
  height: 1278px;
  background: #bdbdbd;
  border-radius: 8px;
}

/* Шапка */
.intro {
  padding: 115px 0 0 265px;
  height: 512px;
  box-sizing: border-box;
}

.intro h1 {
  margin: 0 0 0 4px;
  font-family: 'Lato', sans-serif;
  font-weight: 900;
  font-size: 76px;
  line-height: 90px;
  letter-spacing: 5px;
  -webkit-text-stroke: 1.5px #404040;
}

.intro p {
  margin: 23px 0 0;
  width: 1290px;
  font-family: 'Liberation Serif', serif;
  font-size: 35.7px;
  line-height: 50px;
}

/* Редактор */
.editor {
  margin: 0 168px;
  background: #f8f8f8;
  height: 1088px;
}

.topbar {
  display: flex;
  justify-content: space-between;
  align-items: flex-start;
  height: 160px;
  padding: 0 48px 0 56px;
}

.import {
  display: flex;
  align-items: center;
  height: 156px;
  font-size: 24px;
  font-weight: 700;
  color: #808080;
}

.import .ui-icon {
  margin-right: 23px;
}

.ui-icon {
  display: block;
  fill: #808080;
  flex: none;
}

.icon-file {
  width: 16px;
  height: 22px;
}

.icon-24 {
  width: 24px;
  height: 24px;
}

.top-right {
  display: flex;
  align-items: center;
  margin-top: 60px;
}

.set-name {
  margin: -6px 41px 0 28px;
  font-size: 30px;
  font-weight: 700;
  color: #404040;
}

.download {
  display: flex;
  align-items: center;
  width: 258px;
  height: 80px;
  padding: 0 0 3px 29px;
  border: none;
  border-radius: 5px;
  background: #404040;
  color: #fff;
  font-family: 'Open Sans', sans-serif;
  font-size: 24px;
  font-weight: 600;
}

.icon-gift {
  width: 22px;
  height: 20px;
  margin-right: 20px;
  fill: #fff;
}

.count {
  margin-left: 7px;
  color: #999;
}

.icon-expand {
  width: 25px;
  height: 24px;
  margin-left: 47px;
}

.workspace {
  display: flex;
  padding-left: 4px;
}

.sidebar {
  position: relative;
  width: 720px;
  height: 928px;
  padding: 0 40px;
  box-sizing: border-box;
  background: #fff;
}

.pane {
  position: relative;
  flex: 1;
  min-width: 0;
  padding: 0 40px 0 41px;
}

.head {
  padding-top: 36px;
  padding-bottom: 19px;
  border-bottom: 4px solid #e5e5e5;
}

.head-row {
  display: flex;
  justify-content: space-between;
  align-items: center;
  height: 46px;
}

.group-title {
  font-size: 31px;
  font-weight: 700;
}

.tools {
  display: flex;
  gap: 30px;
}

.icon-arrow {
  width: 20px;
  height: 24px;
}

.icon-trash {
  width: 19px;
  height: 24px;
  margin-right: 10px;
}

.hint {
  margin: 13px 0 0;
  font-size: 24px;
  line-height: 32px;
  color: #808080;
}

.color-head {
  display: flex;
  justify-content: space-between;
  align-items: flex-start;
  margin-top: 26px;
  height: 30px;
}

.field-label {
  font-size: 20px;
  font-weight: 700;
  line-height: 30px;
  color: #808080;
}

.history {
  display: flex;
  gap: 18px;
  margin-right: 11px;
}

.icon-undo {
  width: 19px;
  height: 24px;
}

.icon-off {
  fill: #c4c4c4;
}

.swatch-row {
  display: flex;
  align-items: center;
  margin-top: 18px;
  height: 40px;
}

.swatch-row .mono {
  margin-top: -2px;
}

.swatch {
  width: 40px;
  height: 40px;
  margin-right: 11px;
  border-radius: 50%;
  box-sizing: border-box;
}

.swatch-fill {
  background: #121132;
}

.swatch-stroke {
  background: #17ffdd;
  border: 2px solid #14cfb4;
}

.mono {
  font-family: 'DejaVu Sans Mono', monospace;
  font-size: 20px;
  color: #808080;
}

.enable {
  display: flex;
  align-items: center;
  margin-top: 60px;
  font-size: 20px;
  font-weight: 700;
  color: #808080;
}

.checkbox {
  display: flex;
  align-items: center;
  justify-content: center;
  width: 40px;
  height: 40px;
  margin-right: 21px;
  box-sizing: border-box;
  border: 4px solid #808080;
  border-radius: 3px;
}

.checkbox svg {
  width: 20px;
  height: 16px;
}

.stroke-grid {
  display: grid;
  grid-template-columns: 340px 1fr;
  margin-top: 26px;
}

.width-row {
  display: flex;
  align-items: flex-start;
  margin-top: 14px;
}

.width-row .mono {
  margin: 7px 0 0 11px;
}

.range {
  position: relative;
  width: 199px;
  height: 40px;
  box-sizing: border-box;
  border: 4px solid #404040;
  border-radius: 20px;
  background: #fff;
}

.range-thumb {
  position: absolute;
  left: 32px;
  top: 4px;
  width: 24px;
  height: 24px;
  border-radius: 50%;
  background: #808080;
}

/* Палитра */
.picker {
  display: flex;
  margin-top: 20px;
}

.sat {
  position: relative;
  width: 360px;
  height: 380px;
  overflow: hidden;
  background: linear-gradient(to top, #000, transparent), linear-gradient(to right, #fff, #00ffdd);
}

.sat-cursor {
  position: absolute;
  left: 337px;
  top: -9px;
  width: 18px;
  height: 18px;
  border: 2px solid #fff;
  border-radius: 50%;
}

.hue {
  position: relative;
  width: 20px;
  height: 380px;
  background: linear-gradient(to bottom, #f00, #f0f 17%, #00f 33%, #0ff 50%, #0f0 67%, #ff0 83%, #f00);
}

.hue-handle {
  position: absolute;
  left: 0;
  top: 192px;
  width: 19px;
  height: 10px;
  box-sizing: border-box;
  border: 2px solid #333;
  border-radius: 3px;
  background: #b8fff4;
}

.picker-side {
  width: 240px;
  margin-left: 20px;
}

.mode {
  display: flex;
  height: 40px;
  margin-bottom: 12px;
  border-radius: 6px;
  overflow: hidden;
  font-family: 'Inter', sans-serif;
  font-size: 20px;
  font-weight: 700;
  line-height: 40px;
  text-align: center;
  color: #fff;
}

.mode span {
  flex: 1;
}

.mode-off {
  background: #bdbdbd;
}

.mode-on {
  background: #404040;
}

.chan {
  display: flex;
  align-items: center;
  height: 46px;
  margin-bottom: 14px;
}

.radio {
  width: 28px;
  height: 28px;
  margin: 0 22px;
  box-sizing: border-box;
  border: 1px solid #bbb;
  border-radius: 50%;
  background: #fff;
  box-shadow: inset 0 0 2px rgba(0, 0, 0, 0.2);
}

.radio-on {
  border: 10px solid #3b97ff;
  box-shadow: none;
}

.radio-none {
  visibility: hidden;
}

.chan-input,
.hex {
  display: flex;
  align-items: center;
  height: 46px;
  background: #f3f3f3;
  font-family: 'DejaVu Sans Mono', monospace;
  font-size: 23px;
  color: #808080;
}

.chan-input {
  width: 166px;
  padding-left: 9px;
  box-sizing: border-box;
}

.chan-input b,
.hex b {
  width: 33px;
  font-weight: 400;
  color: #bdbdbd;
}

.chan-input b.on {
  color: #404040;
}

.alpha {
  position: relative;
  width: 170px;
  height: 20px;
  margin: -2px 0 22px 70px;
  background: linear-gradient(to right, rgba(23, 255, 221, 0), #17ffdd), repeating-conic-gradient(#ddd 0 25%, #fff 0 50%) 0 0 / 20px 20px;
}

.alpha-handle {
  position: absolute;
  right: 4px;
  top: 0;
  width: 10px;
  height: 20px;
  box-sizing: border-box;
  border: 2px solid #333;
  border-radius: 3px;
}

.hex {
  width: 236px;
  margin-left: 2px;
  padding-left: 8px;
  box-sizing: border-box;
}

.track {
  position: absolute;
  top: 158px;
  width: 8px;
  border-radius: 4px;
  background: #f2f2f2;
}

.track-side {
  left: 704px;
  height: 600px;
}

.track-pane {
  right: 11px;
  height: 430px;
}

/* Группа иконок */
.add-group {
  display: flex;
  align-items: center;
  font-size: 24px;
  font-weight: 600;
  color: #808080;
}

.icon-plus {
  width: 20px;
  height: 20px;
  margin: 0 21px 0 10px;
}

.toggle {
  position: relative;
  display: flex;
  align-items: center;
  justify-content: flex-end;
  width: 128px;
  height: 60px;
  margin-right: 80px;
  padding-right: 2px;
  box-sizing: border-box;
  border-radius: 30px;
  background: #808080;
}

.icon-moon {
  position: absolute;
  left: 23px;
  top: 20px;
  width: 20px;
  height: 20px;
  fill: #fff;
}

.toggle-knob {
  display: flex;
  align-items: center;
  justify-content: center;
  width: 62px;
  height: 52px;
  border-radius: 26px;
  background: #fff;
}

.icon-sun {
  width: 24px;
  height: 24px;
  fill: #808080;
}

.group {
  display: flex;
  padding-top: 81px;
}

.group-check {
  display: flex;
  align-items: center;
  justify-content: center;
  width: 67px;
  height: 67px;
  box-sizing: border-box;
  border: 4px solid #404040;
  border-radius: 50%;
}

.group-check svg {
  width: 20px;
  height: 16px;
}

.group-body {
  margin-left: 53px;
}

.group-name {
  display: flex;
  gap: 21px;
  font-size: 24px;
  line-height: 40px;
}

.group-name strong {
  font-weight: 700;
}

.group-name span {
  color: #808080;
}

.tiles {
  display: flex;
  flex-wrap: wrap;
  align-items: flex-start;
  gap: 21px;
  width: 1230px;
  margin-top: 21px;
}

.tile {
  display: flex;
  align-items: center;
  justify-content: center;
  width: 53px;
  height: 53px;
  box-sizing: border-box;
  border: 2px solid rgba(0, 0, 0, 0.17);
  border-radius: 6px;
  background: repeating-conic-gradient(#e6e6e6 0 25%, transparent 0 50%) 0 0 / 16px 16px;
}

.tile svg {
  width: 22px;
  height: 22px;
  fill: #121132;
  stroke: #17ffdd;
  stroke-width: 2.3;
  paint-order: stroke;
  fill-rule: evenodd;
  overflow: visible;
}

.tile-lg {
  width: 61px;
  height: 61px;
}

.tile-lg svg {
  width: 30px;
  height: 30px;
  stroke-width: 1.7;
}
```
